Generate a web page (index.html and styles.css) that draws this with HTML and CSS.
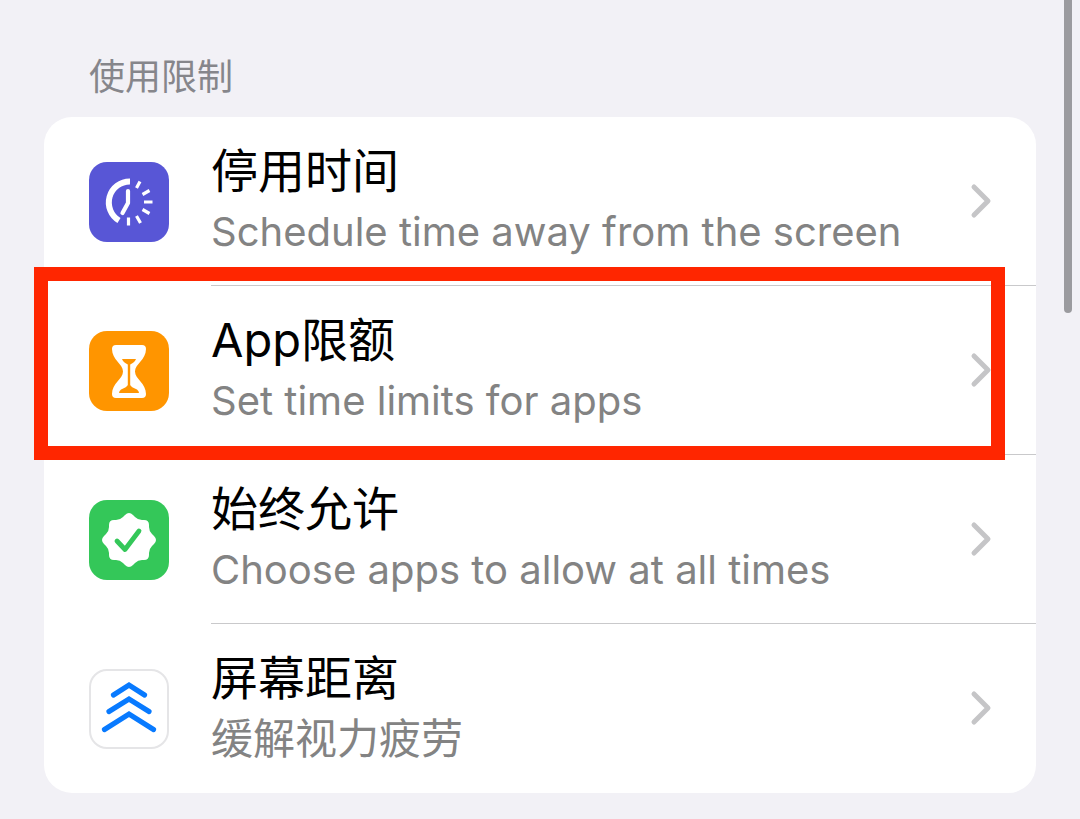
FILE: index.html
```
<!DOCTYPE html>
<html lang="zh-CN">
<head>
  <meta charset="UTF-8" />
  <meta name="viewport" content="width=device-width, initial-scale=1.0"/>
  <title>屏幕使用时间</title>
  <link rel="stylesheet" href="styles.css">
</head>
<body>
  <main class="settings">
    <h2 class="section-title">使用限制</h2>

    <nav class="card">
      <a class="row" href="#downtime">
        <svg class="icon" viewBox="0 0 80 80" aria-hidden="true">
          <rect width="80" height="80" rx="18" fill="#5856d6"/>
          <g fill="none" stroke="#fff">
            <path d="M41 19.500A21 21 0 0 0 30 58.500" stroke-width="6"/>
            <path d="M39 29V41L33.500 51" stroke-width="4.200" stroke-linecap="round" stroke-linejoin="round"/>
            <path d="M47.500 26L51 19.500M53.500 32.500L60.500 28.500M55 40H63.500M53.500 47.500L60.500 51.500M47.500 54L51.500 61M39.500 55.500V63.500" stroke-width="3.200"/>
          </g>
        </svg>
        <span class="row-body">
          <span class="row-text">
            <span class="title">停用时间</span>
            <span class="subtitle">Schedule time away from the screen</span>
          </span>
          <svg class="chevron" viewBox="0 0 22 36" aria-hidden="true"><path d="M4 4L18 18L4 32"/></svg>
        </span>
      </a>

      <a class="row" href="#app-limits">
        <svg class="icon" viewBox="0 0 80 80" aria-hidden="true">
          <rect width="80" height="80" rx="18" fill="#ff9500"/>
          <path d="M27 14H53Q57 14 57 18C57 29 46 33 46 40.500C46 48 57 52 57 63Q57 67 53 67H27Q23 67 23 63C23 52 34 48 34 40.500C34 33 23 29 23 18Q23 14 27 14Z" fill="#fff"/>
          <path d="M33 28H47Q46 31 41.200 33.500V54Q42 56 48 58.500Q50 60 50 62H30Q30 60 32 58.500Q38 56 38.800 54V33.500Q34 31 33 28Z" fill="#ff9500"/>
        </svg>
        <span class="row-body">
          <span class="row-text">
            <span class="title">App限额</span>
            <span class="subtitle">Set time limits for apps</span>
          </span>
          <svg class="chevron" viewBox="0 0 22 36" aria-hidden="true"><path d="M4 4L18 18L4 32"/></svg>
        </span>
        <span class="highlight"></span>
      </a>

      <a class="row" href="#always-allowed">
        <svg class="icon" viewBox="0 0 80 80" aria-hidden="true">
          <rect width="80" height="80" rx="18" fill="#34c759"/>
          <path d="M36 15Q40 11 44 15L46 17Q49 20 53 20H55Q60 20 60 25V27Q60 31 63 34L65 36Q69 40 65 44L63 46Q60 49 60 53V55Q60 60 55 60H53Q49 60 46 63L44 65Q40 69 36 65L34 63Q31 60 27 60H25Q20 60 20 55V53Q20 49 17 46L15 44Q11 40 15 36L17 34Q20 31 20 27V25Q20 20 25 20H27Q31 20 34 17Z" fill="#fff"/>
          <path d="M28 41L36 49.500L50 31" fill="none" stroke="#34c759" stroke-width="4.800" stroke-linecap="round" stroke-linejoin="round"/>
        </svg>
        <span class="row-body">
          <span class="row-text">
            <span class="title">始终允许</span>
            <span class="subtitle">Choose apps to allow at all times</span>
          </span>
          <svg class="chevron" viewBox="0 0 22 36" aria-hidden="true"><path d="M4 4L18 18L4 32"/></svg>
        </span>
      </a>

      <a class="row" href="#screen-distance">
        <svg class="icon" viewBox="0 0 80 80" aria-hidden="true">
          <rect x="1" y="1" width="78" height="78" rx="17" fill="#fff" stroke="#e5e5e7" stroke-width="2"/>
          <path d="M24.500 26L40 16L55.500 26M20 42.500L40 30L60 42.500M15.500 60.500L40 45L64.500 60.500" fill="none" stroke="#087aff" stroke-width="5.200" stroke-linecap="round"/>
        </svg>
        <span class="row-body">
          <span class="row-text">
            <span class="title">屏幕距离</span>
            <span class="subtitle subtitle-zh">缓解视力疲劳</span>
          </span>
          <svg class="chevron" viewBox="0 0 22 36" aria-hidden="true"><path d="M4 4L18 18L4 32"/></svg>
        </span>
      </a>
    </nav>
  </main>

  <div class="scroll-thumb"></div>
</body>
</html>
```
FILE: styles.css
```
* {
  box-sizing: border-box;
}

body {
  margin: 0;
  min-height: 100vh;
  background: #f2f1f6;
  font-family: Inter, "Noto Sans CJK SC", sans-serif;
}

.settings {
  padding: 53px 44px 26px;
}

.section-title {
  margin: 0 0 16px;
  padding-left: 45px;
  color: #86868b;
  font-size: 36px;
  line-height: 48px;
  font-weight: 400;
}

.card {
  background: #fff;
  border-radius: 28px;
}

.row {
  position: relative;
  display: flex;
  align-items: center;
  gap: 42px;
  padding-left: 45px;
  color: #000;
  text-decoration: none;
}

.icon {
  flex: none;
  width: 80px;
  height: 80px;
}

.row-body {
  flex: 1;
  display: flex;
  align-items: center;
  justify-content: space-between;
  padding: 24px 44px 24px 0;
  border-bottom: 1px solid #c9c9cb;
}

.row:last-child .row-body {
  border-bottom-color: transparent;
}

.row-text {
  display: flex;
  flex-direction: column;
}

.title {
  font-size: 47px;
  line-height: 60px;
}

.subtitle {
  color: #838383;
  font-size: 40px;
  line-height: 62px;
  margin-bottom: -2px;
}

.subtitle-zh {
  font-size: 42px;
}

.chevron {
  flex: none;
  width: 22px;
  height: 36px;
  fill: none;
  stroke: #c5c5c7;
  stroke-width: 5;
  stroke-linecap: round;
  stroke-linejoin: round;
}

/* red frame over the App limits row */
.highlight {
  position: absolute;
  top: -19px;
  right: 31px;
  bottom: -5px;
  left: -10px;
  z-index: 1;
  border: 14px solid #ff2600;
}

.scroll-thumb {
  position: absolute;
  top: 0;
  right: 8px;
  width: 8px;
  height: 313px;
  border-radius: 0 0 4px 4px;
  background: #9b9b9f;
}
```
